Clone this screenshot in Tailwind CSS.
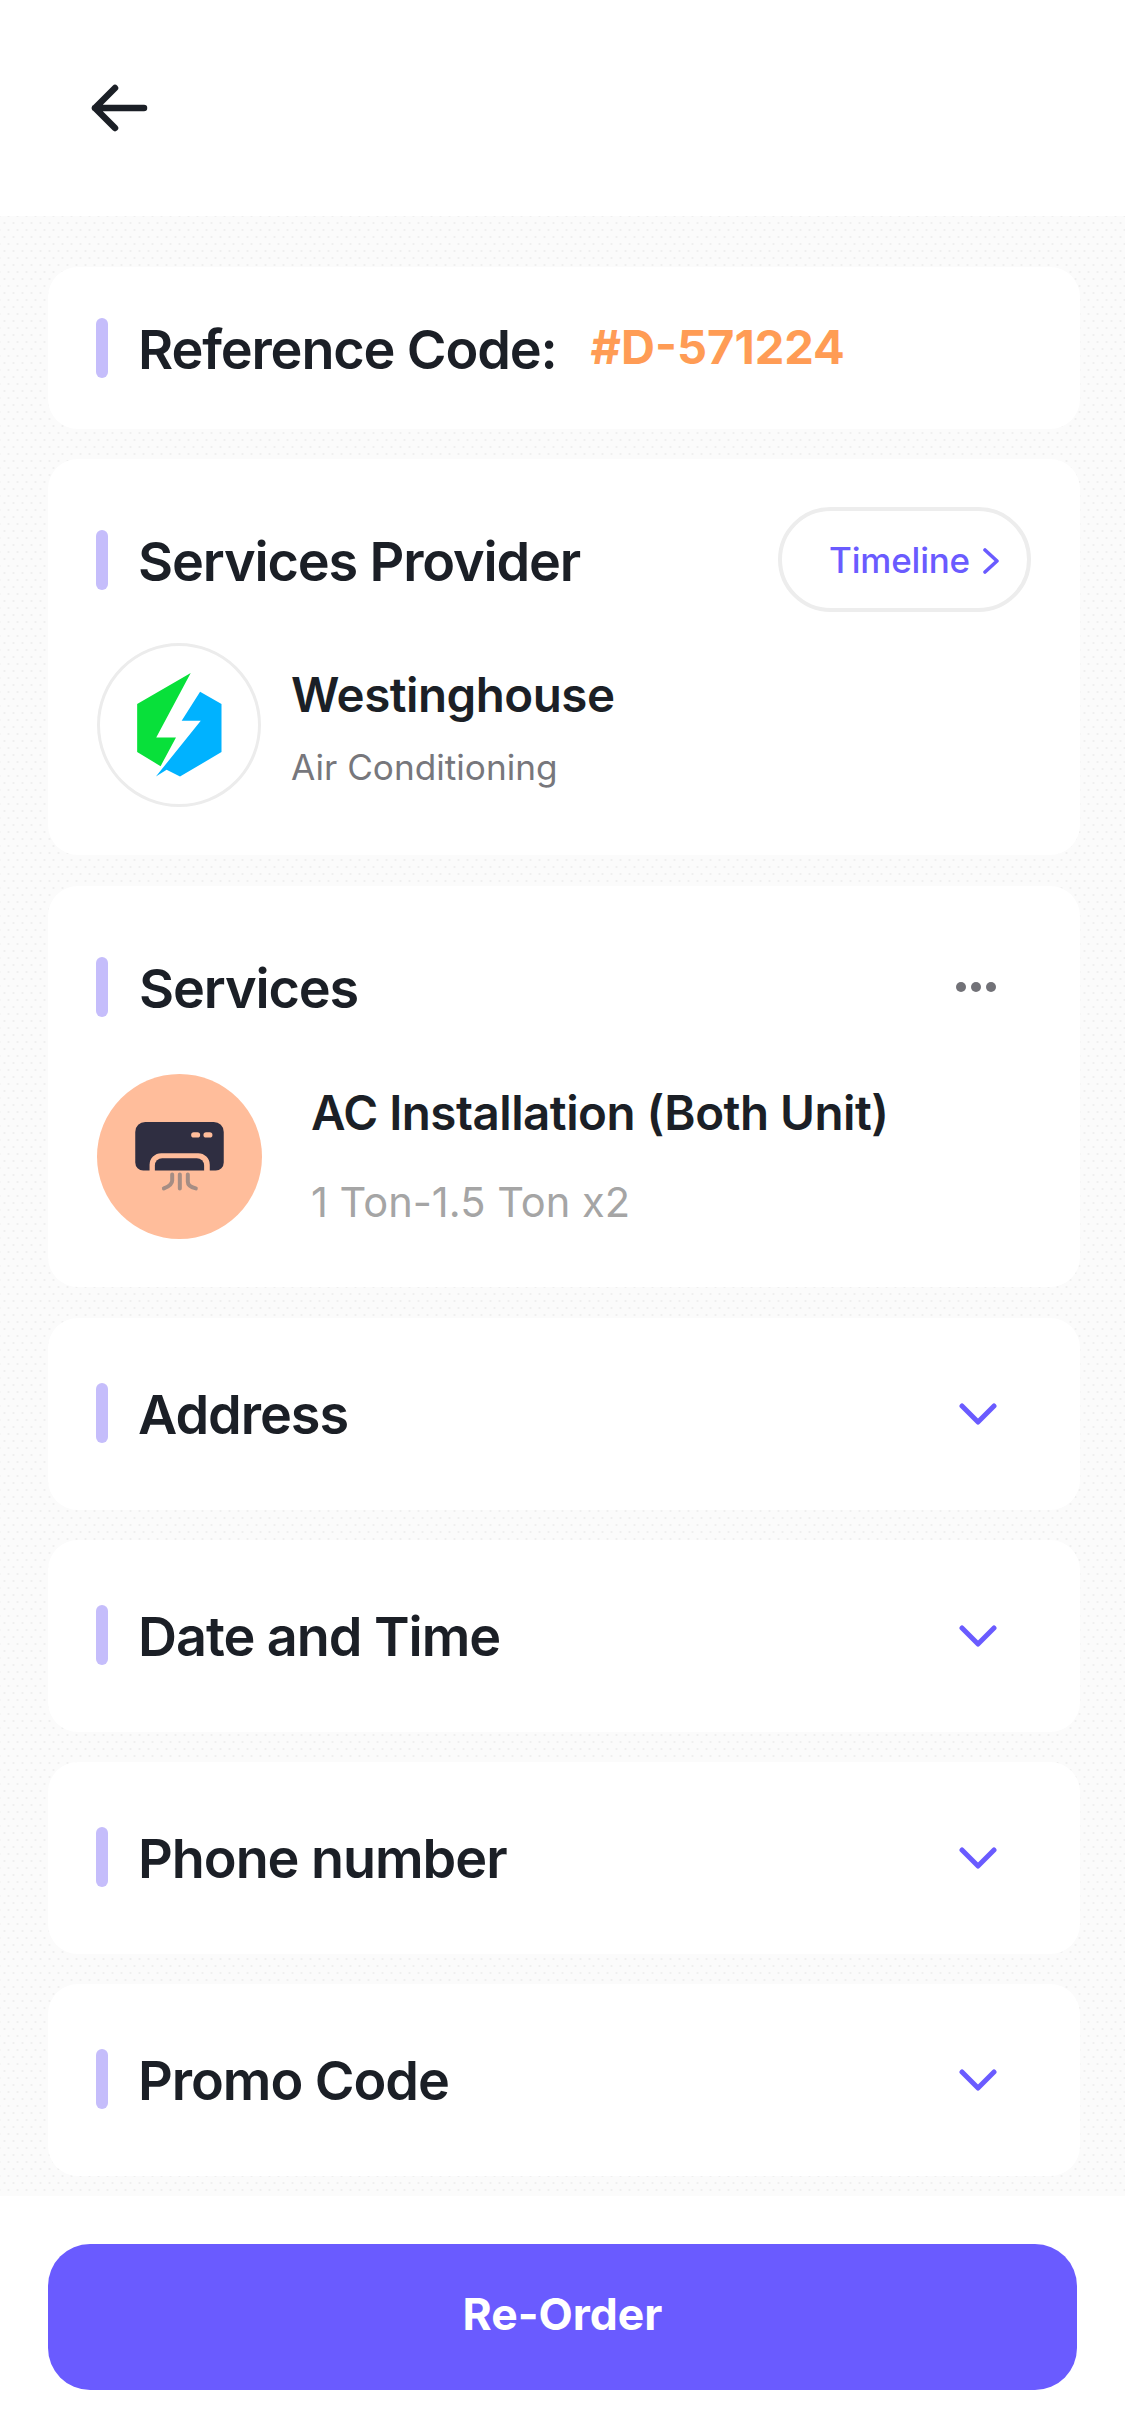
<!DOCTYPE html>
<html lang="en">
<head>
  <meta charset="UTF-8" />
  <meta name="viewport" content="width=device-width, initial-scale=1.0" />
  <title>Order Details</title>
  <script src="https://cdn.jsdelivr.net/npm/@tailwindcss/browser@4"></script>
</head>
<body class="bg-white text-[#1b1f26] font-['Inter',sans-serif]">
  <div class="w-[1125px] h-[2436px] flex flex-col overflow-hidden">
    <!-- top bar -->
    <header class="h-[216px] shrink-0 bg-white pl-[90px] pt-[83px]">
      <svg class="w-[60px] h-[50px]" viewBox="0 0 60 50" fill="none" stroke="#1b1f26" stroke-width="6.5" stroke-linecap="round" stroke-linejoin="round">
        <path d="M54 25H5M25 5L5 25L25 45" />
      </svg>
    </header>

    <main class="h-[1980px] shrink-0 bg-[#fbfbfb] bg-[radial-gradient(circle,#efefef_1px,transparent_1.2px),radial-gradient(circle,#efefef_1px,transparent_1.2px)] bg-[length:9px_14px] bg-[position:0_0,4px_7px] pl-[48px] pr-[45px] pt-[51px] flex flex-col gap-[30px]">
      <!-- reference code -->
      <section class="h-[162px] bg-white rounded-[30px] pl-[48px] flex items-center">
        <span class="w-[12px] h-[60px] rounded-full bg-[#c5bdfb]"></span>
        <h2 class="ml-[30px] text-[54px] font-semibold tracking-[-1.15px] mt-[3px]">Reference Code:</h2>
        <span class="ml-[34px] text-[47px] font-bold text-[#ff9c55] -mt-[2px]">#D-571224</span>
      </section>

      <!-- provider -->
      <section class="h-[396px] bg-white rounded-[30px] pl-[48px] pr-[49px] pt-[48px]">
        <div class="flex items-center justify-between h-[105px]">
          <div class="flex items-center">
            <span class="w-[12px] h-[60px] rounded-full bg-[#c5bdfb]"></span>
            <h2 class="ml-[30px] text-[54px] font-semibold tracking-[-1.15px] mt-[3px]">Services Provider</h2>
          </div>
          <button class="w-[253px] h-[105px] rounded-full border-[4px] border-[#ededed] pl-[47px] pt-[2px] flex items-center gap-[13px] text-[35px] font-medium tracking-[-0.2px] text-[#6a5bff]">
            Timeline
            <svg class="w-[16px] h-[28px]" viewBox="0 0 16 28" fill="none" stroke="#6a5bff" stroke-width="3.6" stroke-linecap="round" stroke-linejoin="round"><path d="M2 3L14 14L2 25" /></svg>
          </button>
        </div>
        <div class="flex items-center mt-[31px] ml-[1px]">
          <div class="w-[164px] h-[164px] rounded-full border-[3px] border-[#ececec] shrink-0 flex items-center justify-center">
            <svg class="w-[164px] h-[164px] shrink-0" viewBox="82 68 490 490">
              <path fill="#08e03a" d="M202 250L362 158L259 350H318L272 436L202 394Z" />
              <path fill="#00b2ff" d="M390 214L454 250V394L330 467L290 447L258 467L392 300H335Z" />
            </svg>
          </div>
          <div class="ml-[30px] pt-[6px]">
            <p class="text-[47.5px] font-semibold tracking-[-0.5px] leading-[56px]">Westinghouse</p>
            <p class="text-[35.2px] text-[#77777c] leading-[44px] mt-[22px]">Air Conditioning</p>
          </div>
        </div>
      </section>

      <!-- services -->
      <section class="h-[401px] mt-[1px] bg-white rounded-[30px] pl-[48px] pr-[48px] pt-[71px]">
        <div class="flex items-center justify-between h-[60px]">
          <div class="flex items-center">
            <span class="w-[12px] h-[60px] rounded-full bg-[#c5bdfb]"></span>
            <h2 class="ml-[31px] text-[54px] font-semibold tracking-[-1.15px] mt-[3px]">Services</h2>
          </div>
          <div class="flex gap-[5px] mr-[36px]">
            <span class="w-[10px] h-[10px] rounded-full bg-[#717177]"></span>
            <span class="w-[10px] h-[10px] rounded-full bg-[#717177]"></span>
            <span class="w-[10px] h-[10px] rounded-full bg-[#717177]"></span>
          </div>
        </div>
        <div class="flex items-center mt-[57px] ml-[1px]">
          <div class="w-[165px] h-[165px] rounded-full bg-[#ffbd9b] shrink-0">
            <svg class="w-[165px] h-[165px]" viewBox="82 72 496 496" fill="none">
              <path fill="#2f2e41" d="M227 216H433A30 30 0 0 1 463 246V338A24 24 0 0 1 439 362H421V345A35 35 0 0 0 386 310H275A35 35 0 0 0 240 345V362H221A24 24 0 0 1 197 338V246A30 30 0 0 1 227 216Z" />
              <path fill="#2f2e41" d="M278 325H382A22 22 0 0 1 404 347V362H256V347A22 22 0 0 1 278 325Z" />
              <rect x="365" y="247" width="27" height="16" rx="8" fill="#ffbd9b" />
              <rect x="402" y="247" width="27" height="16" rx="8" fill="#ffbd9b" />
              <path stroke="#a58d84" stroke-width="12" stroke-linecap="round" d="M308 374V392Q308 406 283 416M331 374V416M355 374V396Q355 410 379 416" />
            </svg>
          </div>
          <div class="ml-[49px]">
            <p class="text-[47.5px] font-semibold tracking-[-0.5px] leading-[56px] -mt-[2px]">AC Installation (Both Unit)</p>
            <p class="text-[41.6px] text-[#a5a5a5] leading-[50px] mt-[36px]">1 Ton-1.5 Ton x2</p>
          </div>
        </div>
      </section>

      <!-- collapsed rows -->
      <section class="h-[192px] mt-[1px] bg-white rounded-[30px] pl-[48px] pr-[83px] flex items-center">
        <span class="w-[12px] h-[60px] rounded-full bg-[#c5bdfb] mb-[2px]"></span>
        <h2 class="ml-[30px] text-[54px] font-semibold tracking-[-1.05px] mt-[1px]">Address</h2>
        <svg class="ml-auto w-[38px] h-[22px]" viewBox="0 0 38 22" fill="none" stroke="#6a5bff" stroke-width="5" stroke-linecap="round" stroke-linejoin="round"><path d="M3 3L19 19L35 3" /></svg>
      </section>
      <section class="h-[192px] bg-white rounded-[30px] pl-[48px] pr-[83px] flex items-center">
        <span class="w-[12px] h-[60px] rounded-full bg-[#c5bdfb] mb-[2px]"></span>
        <h2 class="ml-[30px] text-[54px] font-semibold tracking-[-1.05px] mt-[1px]">Date and Time</h2>
        <svg class="ml-auto w-[38px] h-[22px]" viewBox="0 0 38 22" fill="none" stroke="#6a5bff" stroke-width="5" stroke-linecap="round" stroke-linejoin="round"><path d="M3 3L19 19L35 3" /></svg>
      </section>
      <section class="h-[192px] bg-white rounded-[30px] pl-[48px] pr-[83px] flex items-center">
        <span class="w-[12px] h-[60px] rounded-full bg-[#c5bdfb] mb-[2px]"></span>
        <h2 class="ml-[30px] text-[54px] font-semibold tracking-[-1.05px] mt-[1px]">Phone number</h2>
        <svg class="ml-auto w-[38px] h-[22px]" viewBox="0 0 38 22" fill="none" stroke="#6a5bff" stroke-width="5" stroke-linecap="round" stroke-linejoin="round"><path d="M3 3L19 19L35 3" /></svg>
      </section>
      <section class="h-[192px] bg-white rounded-[30px] pl-[48px] pr-[83px] flex items-center">
        <span class="w-[12px] h-[60px] rounded-full bg-[#c5bdfb] mb-[2px]"></span>
        <h2 class="ml-[30px] text-[54px] font-semibold tracking-[-1.05px] mt-[1px]">Promo Code</h2>
        <svg class="ml-auto w-[38px] h-[22px]" viewBox="0 0 38 22" fill="none" stroke="#6a5bff" stroke-width="5" stroke-linecap="round" stroke-linejoin="round"><path d="M3 3L19 19L35 3" /></svg>
      </section>
    </main>

    <footer class="flex-1 bg-white px-[48px] pt-[48px]">
      <button class="w-[1029px] h-[146px] rounded-[42px] bg-[#6a5bff] text-white text-[44.5px] font-bold pb-[5px]">Re-Order</button>
    </footer>
  </div>
</body>
</html>
